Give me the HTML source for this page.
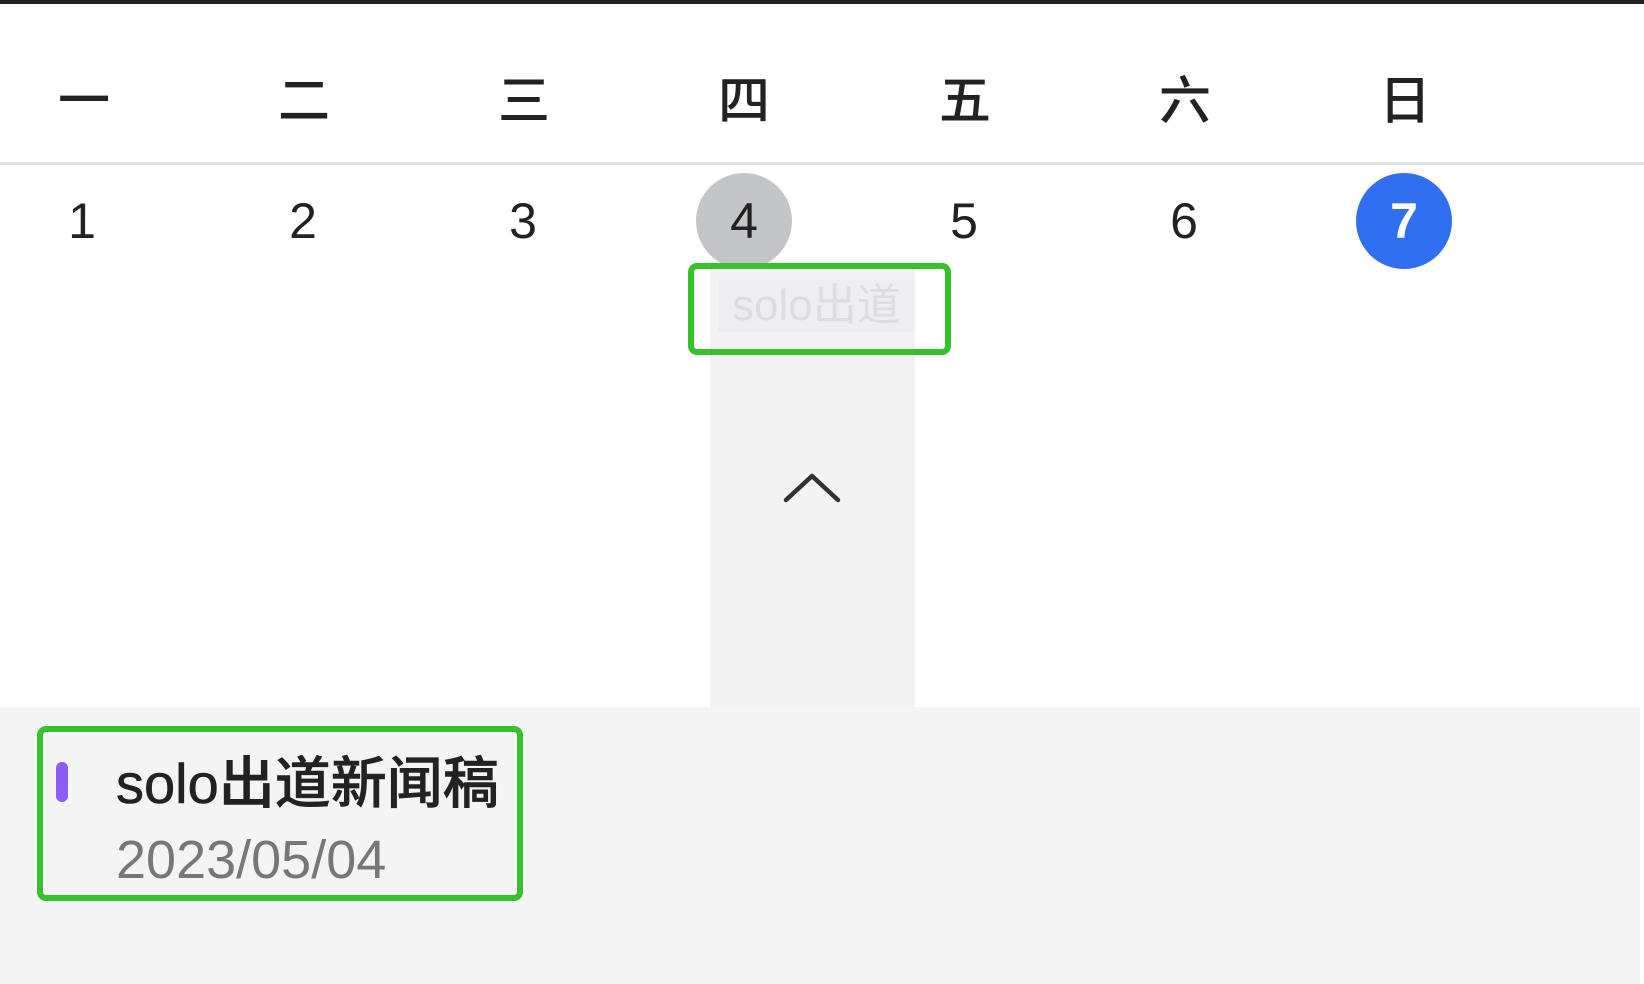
<!DOCTYPE html>
<html><head><meta charset="utf-8"><style>
*{margin:0;padding:0;box-sizing:border-box}
body{width:1644px;height:984px;background:#fff;position:relative;overflow:hidden;font-family:"Liberation Sans","Noto Sans CJK SC",sans-serif;color:#222}
.top{position:absolute;left:0;top:0;width:1644px;height:4px;background:#222}
.wd{position:absolute;top:67px;width:100px;margin-left:-50px;text-align:center;font-size:52px;line-height:60px;font-family:"Noto Sans CJK SC",sans-serif;font-weight:500}
.sep{position:absolute;left:0;top:162px;width:1644px;height:3px;background:#e2e2e2}
.num{position:absolute;top:173px;width:96px;height:96px;margin-left:-48px;border-radius:50%;text-align:center;font-size:50px;line-height:96px;color:#222}
.col{position:absolute;left:710px;top:265px;width:205px;height:442px;background:#f3f3f3}
.panel{position:absolute;left:0;top:707px;width:1640px;height:277px;background:#f4f4f5}
.g{position:absolute;border:6px solid #35c22b;border-radius:9px}
</style></head><body>
<div class="top"></div>
<div class="wd" style="left:84px">一</div>
<div class="wd" style="left:304px">二</div>
<div class="wd" style="left:524px">三</div>
<div class="wd" style="left:744px">四</div>
<div class="wd" style="left:965px">五</div>
<div class="wd" style="left:1185px">六</div>
<div class="wd" style="left:1405px">日</div>
<div class="sep"></div>
<div class="col"></div>
<div class="num" style="left:82px">1</div>
<div class="num" style="left:303px">2</div>
<div class="num" style="left:523px">3</div>
<div class="num" style="left:744px;background:#c4c5c8">4</div>
<div class="num" style="left:964px">5</div>
<div class="num" style="left:1184px">6</div>
<div class="num" style="left:1404px;background:#2f6ff0;color:#fff;font-weight:bold">7</div>
<div style="position:absolute;left:718px;top:280px;width:197px;height:52px;background:#eeeef2;color:#dcdce2;font-size:44px;line-height:52px;padding-left:14px;overflow:hidden;white-space:nowrap">solo出道</div>
<div class="g" style="left:688px;top:263px;width:263px;height:92px"></div>
<svg style="position:absolute;left:782px;top:470px" width="60" height="36"><path d="M4 30 L30 6 L56 30" fill="none" stroke="#333" stroke-width="4.5" stroke-linecap="round" stroke-linejoin="round"/></svg>
<div class="panel"></div>
<div style="position:absolute;left:56px;top:762px;width:12px;height:40px;border-radius:6px;background:#8b5cf6"></div>
<div style="position:absolute;left:116px;top:750px;font-size:56px;line-height:68px;color:#222;font-weight:500;-webkit-text-stroke:0.6px #222;white-space:nowrap">solo出道新闻稿</div>
<div style="position:absolute;left:116px;top:829px;font-size:54px;line-height:62px;color:#777;white-space:nowrap">2023/05/04</div>
<div class="g" style="left:37px;top:726px;width:486px;height:175px"></div>
</body></html>
